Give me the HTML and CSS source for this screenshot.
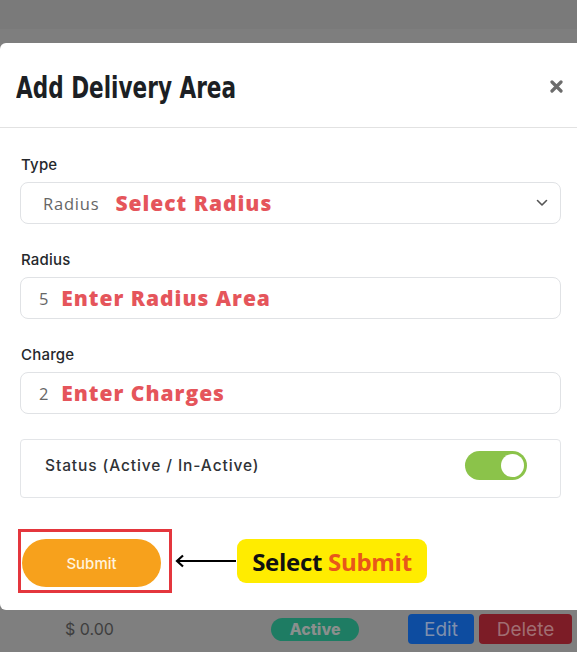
FILE: index.html
```html
<!DOCTYPE html>
<html lang="en">
<head>
<meta charset="utf-8">
<title>Add Delivery Area</title>
<link rel="stylesheet" href="styles.css">
</head>
<body>
<div class="top-band"></div>
<div class="top-band2"></div>
<div class="modal">
  <div class="modal-header">
    <h2 class="modal-title">Add Delivery Area</h2>
    <span class="close" aria-label="Close">
      <svg width="13" height="13" viewBox="0 0 13 13"><path d="M2 2 L11 11 M11 2 L2 11" stroke="#6c6c6c" stroke-width="3.2" stroke-linecap="round"/></svg>
    </span>
  </div>
  <div class="modal-body">
    <div class="field">
      <label class="label">Type</label>
      <div class="control select">
        <span class="value value-select">Radius</span>
        <span class="note">Select Radius</span>
        <svg class="chevron" width="12" height="8" viewBox="0 0 12 8"><path d="M1.5 1.5 L6 6 L10.5 1.5" fill="none" stroke="#555" stroke-width="1.6" stroke-linecap="round" stroke-linejoin="round"/></svg>
      </div>
    </div>
    <div class="field">
      <label class="label">Radius</label>
      <div class="control">
        <span class="value">5</span>
        <span class="note">Enter Radius Area</span>
      </div>
    </div>
    <div class="field">
      <label class="label">Charge</label>
      <div class="control">
        <span class="value">2</span>
        <span class="note">Enter Charges</span>
      </div>
    </div>
    <div class="status-box">
      <span class="status-text">Status (Active / In-Active)</span>
      <span class="toggle"><span class="knob"></span></span>
    </div>
    <div class="actions">
      <div class="highlight"><button class="submit">Submit</button></div>
      <div class="arrow">
        <svg width="62" height="14" viewBox="0 0 62 14"><path d="M2 7 H61" stroke="#000" stroke-width="2.2"/><path d="M8 1.5 L2 7 L8 12.5" fill="none" stroke="#000" stroke-width="2.2" stroke-linejoin="miter"/></svg>
      </div>
      <div class="callout">Select <span class="callout-accent">Submit</span></div>
    </div>
  </div>
</div>
<div class="table-row">
  <span class="price">$ 0.00</span>
  <span class="badge">Active</span>
  <span class="btn btn-edit">Edit</span>
  <span class="btn btn-delete">Delete</span>
</div>
</body>
</html>
```
FILE: styles.css
```css
html, body {
  margin: 0;
  padding: 0;
}
body {
  width: 577px;
  height: 652px;
  overflow: hidden;
  background: #7f7f7f;
  font-family: "Inter", "Noto Sans", sans-serif;
}
.top-band {
  height: 29px;
  background: #7a7a7a;
}
.top-band2 {
  height: 14px;
  background: #7e7e7e;
}
.modal {
  background: #fff;
  height: 567px;
  border-radius: 6px 0 0 6px;
  display: flex;
  flex-direction: column;
}
.modal-header {
  height: 85px;
  border-bottom: 1px solid #e2e2e2;
  display: flex;
  align-items: center;
  justify-content: space-between;
  padding: 0 14px 0 16px;
  box-sizing: border-box;
}
.modal-title {
  margin: 4px 0 0 0;
  font-family: "DejaVu Sans Condensed", "Liberation Sans Narrow", sans-serif;
  font-weight: 700;
  font-size: 30px;
  color: #1c1f24;
  transform: scaleX(0.8);
  transform-origin: left center;
  white-space: nowrap;
}
.close {
  display: flex;
  margin-top: 2px;
}
.modal-body {
  padding: 26px 16px 0 20px;
  display: flex;
  flex-direction: column;
}
.field {
  display: flex;
  flex-direction: column;
  margin-bottom: 25px;
}
.label {
  font-size: 15px;
  line-height: 22px;
  font-weight: 500;
  color: #25282c;
  padding-left: 1px;
  margin-bottom: 6px;
  letter-spacing: 0.2px;
}
.control {
  height: 42px;
  box-sizing: border-box;
  border: 1px solid #e0e2e5;
  border-radius: 8px;
  display: flex;
  align-items: center;
  padding-left: 18px;
}
.select {
  padding-left: 22px;
  padding-right: 12px;
}
.value {
  font-family: "Open Sans", sans-serif;
  font-size: 16.5px;
  letter-spacing: 0.8px;
  color: #666;
  margin-right: 12px;
}
.value-select {
  margin-right: 16px;
}
.note {
  font-family: "Open Sans", sans-serif;
  font-weight: 800;
  font-size: 21px;
  color: #e5555b;
  letter-spacing: 1px;
}
.chevron {
  margin-left: auto;
}
.status-box {
  height: 59px;
  box-sizing: border-box;
  border: 1px solid #e3e5e8;
  border-radius: 4px;
  display: flex;
  align-items: center;
  justify-content: space-between;
  padding: 0 33px 6px 24px;
}
.status-text {
  font-size: 15.5px;
  font-weight: 500;
  color: #2f3236;
  letter-spacing: 0.9px;
}
.toggle {
  width: 62px;
  height: 29px;
  border-radius: 15px;
  background: #8bc34a;
  display: flex;
  align-items: center;
  justify-content: flex-end;
  padding-right: 3px;
  box-sizing: border-box;
}
.knob {
  width: 23px;
  height: 23px;
  border-radius: 50%;
  background: #fff;
}
.actions {
  margin-top: 31px;
  margin-left: -2px;
  display: flex;
  align-items: center;
}
.highlight {
  width: 154px;
  height: 64px;
  box-sizing: border-box;
  border: 3px solid #e4363d;
  padding: 7px 8px 3px 1px;
}
.submit {
  width: 139px;
  height: 48px;
  border: none;
  border-radius: 24px;
  background: #f7a11c;
  color: #fff3dc;
  font-family: "Inter", sans-serif;
  font-size: 15px;
  font-weight: 500;
}
.arrow {
  display: flex;
  margin-left: 3px;
}
.callout {
  width: 190px;
  height: 44px;
  box-sizing: border-box;
  background: #ffec00;
  border-radius: 9px;
  display: flex;
  align-items: center;
  justify-content: center;
  gap: 6px;
  font-family: "Open Sans", sans-serif;
  font-weight: 700;
  font-size: 24px;
  color: #111;
  letter-spacing: -0.3px;
}
.callout-accent {
  color: #e8571a;
}
.table-row {
  height: 42px;
  box-sizing: border-box;
  padding-bottom: 4px;
  display: flex;
  align-items: center;
}
.price {
  margin-left: 65px;
  font-size: 16px;
  color: #3e3e3e;
  width: 206px;
}
.badge {
  width: 88px;
  height: 23px;
  border-radius: 12px;
  background: #1e7c63;
  color: #8a8f8d;
  font-weight: 800;
  font-size: 16px;
  display: flex;
  align-items: center;
  justify-content: center;
}
.btn {
  height: 30px;
  border-radius: 4px;
  display: flex;
  align-items: center;
  justify-content: center;
  font-size: 19px;
}
.btn-edit {
  margin-left: 49px;
  width: 66px;
  background: #0d4ca0;
  color: #7f90ad;
}
.btn-delete {
  margin-left: 5px;
  width: 93px;
  background: #7c1c26;
  color: #a06d72;
}
```
